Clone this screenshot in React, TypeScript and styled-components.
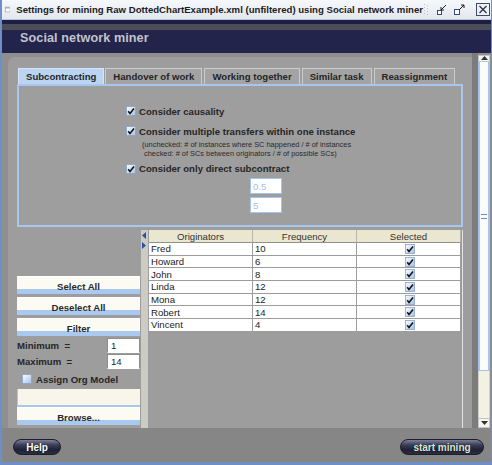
import styled, { createGlobalStyle } from 'styled-components'

// global
const GlobalStyle = createGlobalStyle`
  html, body {
    margin: 0;
    padding: 0;
    background: #ffffff;
  }
  body {
    font-family: 'Liberation Sans', Arial, sans-serif;
  }
`

// styled
const Window = styled.div`
  width: 492px;
  height: 465px;
  box-sizing: border-box;
  display: flex;
  flex-direction: column;
  border-left: 2px solid #6d8fc6;
  border-right: 1px solid #6d8fc6;
  border-bottom: 3px solid #6d8fc6;
  background: #8f8f8f;
  overflow: hidden;
`
const TitleBar = styled.div`
  display: flex;
  align-items: center;
  height: 20px;
  padding-left: 3px;
  background: linear-gradient(#f6f8fb, #e3e8ef);
  border-bottom: 1px solid #b9c4d4;
  box-sizing: border-box;
`
const TitleText = styled.span`
  flex: 1;
  margin-left: 6px;
  font-size: 9.6px;
  font-weight: bold;
  color: #1c1c1c;
  white-space: nowrap;
`
const TitleButtons = styled.div`
  display: flex;
  align-items: center;
  gap: 5px;
  padding-right: 1px;
`
const Header = styled.div`
  display: flex;
  align-items: flex-start;
  height: 33px;
  padding: 11px 0 0 18px;
  box-sizing: border-box;
  background: linear-gradient(#1c1e44 0 4px, #4d4d57 4px 10px, #22244b 10px 100%);
`
const HeaderTitle = styled.span`
  font-size: 12.6px;
  font-weight: bold;
  color: #c3c4cc;
  letter-spacing: 0.1px;
`
const Body = styled.div`
  display: flex;
  height: 375px;
`
const Panel = styled.div`
  flex: 1;
  display: flex;
  flex-direction: column;
  margin: 4px 0 0 6px;
  padding: 11px 9px 0 9px;
  background: #9d9d9d;
  border-top-left-radius: 7px;
`
const TabRow = styled.div`
  display: flex;
  align-items: flex-end;
  height: 16px;
  padding-left: 1px;
  gap: 1px;
`
const Tab = styled.div<{ $active?: boolean; $gap?: number }>`
  height: 16px;
  box-sizing: border-box;
  display: flex;
  align-items: center;
  justify-content: center;
  padding: 0 7px;
  margin-left: ${({ $gap }) => $gap ?? 0}px;
  font-size: 9.6px;
  font-weight: bold;
  color: #262626;
  white-space: nowrap;
  background: ${({ $active }) => ($active ? '#bad4f1' : '#a3a3a3')};
  border: 1px solid ${({ $active }) => ($active ? '#d6e6f8' : '#cdcdcd')};
  border-bottom: none;
`
const TabPane = styled.div`
  height: 143px;
  box-sizing: border-box;
  display: flex;
  flex-direction: column;
  padding: 18px 0 0 107px;
  border: 2px solid #a9c7ec;
  background: #9e9e9e;
`
const CheckRow = styled.label<{ $mt?: number }>`
  display: flex;
  align-items: center;
  gap: 3px;
  height: 14px;
  margin-top: ${({ $mt }) => $mt ?? 0}px;
  font-size: 9.6px;
  font-weight: bold;
  color: #262626;
`
const Note = styled.div`
  margin-left: 16px;
  padding-top: 1.5px;
  font-size: 7.4px;
  line-height: 9.5px;
  color: #2a2a2a;
  white-space: pre;
`
const ParamInput = styled.div<{ $mt?: number }>`
  width: 32px;
  height: 16px;
  box-sizing: border-box;
  margin: ${({ $mt }) => $mt ?? 0}px 0 0 124px;
  padding: 2px 2px 0;
  font-size: 9.6px;
  color: #a7bfe0;
  background: #ffffff;
  border: 1px solid #a6c4ea;
`
const Lower = styled.div`
  flex: 1;
  display: flex;
  margin-top: 3px;
`
const LeftColumn = styled.div`
  width: 123px;
  display: flex;
  flex-direction: column;
  padding-top: 46px;
`
const StripeButton = styled.div<{ $mt?: number }>`
  height: 18px;
  box-sizing: border-box;
  display: flex;
  align-items: flex-end;
  justify-content: center;
  padding-bottom: 2px;
  margin-top: ${({ $mt }) => $mt ?? 0}px;
  font-size: 9.6px;
  font-weight: bold;
  color: #2a2a2a;
  background: linear-gradient(#fbfbf3 0 72%, #a9c9ee 72% 100%);
  border-top: 1px solid #ffffff;
`
const EmptyField = styled.div`
  height: 18px;
  margin-top: 2px;
  box-sizing: border-box;
  background: #f8f6ea;
  border-left: 1px solid #a9c7ec;
  border-bottom: 2px solid #a9c7ec;
`
const RangeRow = styled.div<{ $mt?: number }>`
  display: flex;
  align-items: center;
  height: 15px;
  margin-top: ${({ $mt }) => $mt ?? 0}px;
`
const RangeLabel = styled.span`
  flex: 1;
  font-size: 9.6px;
  font-weight: bold;
  color: #262626;
  white-space: pre;
`
const RangeInput = styled.div`
  width: 33px;
  height: 15px;
  box-sizing: border-box;
  padding: 1px 3px 0;
  font-size: 9.6px;
  color: #1f1f1f;
  background: #ffffff;
  border: 1px solid #8d8d8d;
  border-bottom-color: #ffffff;
`
const AssignRow = styled(CheckRow)`
  padding-left: 5px;
  height: 16px;
  gap: 4px;
`
const Splitter = styled.div`
  width: 7px;
  margin: 0 1px 0 1px;
  display: flex;
  flex-direction: column;
  align-items: center;
  gap: 3px;
  padding-top: 2px;
  background-color: #dedcd2;
  background-image: radial-gradient(#b9b8b0 0.6px, transparent 0.8px);
  background-size: 2px 2px;
`
const TableArea = styled.div`
  flex: 1;
  border-right: 1px solid #e4e4e4;
`
const Grid = styled.div`
  display: grid;
  grid-template-columns: 104px 104px 1fr;
  background: #ffffff;
  border-right: 1px solid #9a9a9a;
`
const HeadCell = styled.div`
  height: 13px;
  box-sizing: border-box;
  display: flex;
  align-items: center;
  justify-content: center;
  font-size: 9.6px;
  color: #333333;
  background-color: #f3f0dc;
  background-image: radial-gradient(#dedac2 0.6px, transparent 0.8px);
  background-size: 2px 2px;
  border-right: 1px solid #b8b6a8;
  border-bottom: 1px solid #8f8f8f;
  &:last-child {
    border-right: none;
  }
`
const Cell = styled.div<{ $center?: boolean }>`
  height: 12.7px;
  box-sizing: border-box;
  display: flex;
  align-items: center;
  justify-content: ${({ $center }) => ($center ? 'center' : 'flex-start')};
  padding-left: 2px;
  font-size: 9.6px;
  color: #222222;
  border-right: 1px solid #9c9c9c;
  border-bottom: 1px solid #9c9c9c;
`
const ScrollColumn = styled.div`
  display: flex;
  flex-direction: column;
  width: 12px;
  margin: 2px 1px 0 6px;
  position: relative;
  &::before {
    content: '';
    position: absolute;
    left: -6px;
    top: -2px;
    bottom: 0;
    width: 6px;
    background: #7c7c7c;
  }
`
const ScrollArrow = styled.div<{ $h: number }>`
  height: ${({ $h }) => $h}px;
  display: flex;
  align-items: center;
  justify-content: center;
  background: #f4f4f0;
  border: 1px solid #c5c5c5;
  box-sizing: border-box;
`
const ScrollThumb = styled.div`
  height: 309px;
  box-sizing: border-box;
  display: flex;
  align-items: center;
  justify-content: center;
  background: #fbfbfb;
  border-left: 2px solid #a6c4ec;
  border-right: 2px solid #a6c4ec;
  border-bottom: 1px solid #a6c4ec;
`
const ScrollTrack = styled.div`
  flex: 1;
  background: #f3f1e4;
  border-left: 1px solid #d0d0c8;
  border-right: 1px solid #d0d0c8;
`
const Grip = styled.div`
  width: 6px;
  height: 3px;
  border-top: 1px solid #6f8fc2;
  border-bottom: 1px solid #6f8fc2;
`
const Footer = styled.div`
  flex: 1;
  display: flex;
  justify-content: space-between;
  align-items: flex-start;
  padding: 11px 7px 0 11px;
  background: #868686;
`
const PillButton = styled.div<{ $w: number; $color: string }>`
  width: ${({ $w }) => $w}px;
  height: 16px;
  box-sizing: border-box;
  display: flex;
  align-items: center;
  justify-content: center;
  border-radius: 8px;
  border: 1px solid #1d1e26;
  background: linear-gradient(#7c8198 0%, #3a3e5a 35%, #1f2134 70%, #2b2d42 100%);
  font-size: 10px;
  font-weight: bold;
  color: ${({ $color }) => $color};
  text-shadow: 0 0 1px #000000;
`

// interface
interface CheckProps {
  checked?: boolean
}

// components
function CheckBox({ checked = true }: CheckProps) {
  return (
    <svg width="10" height="10" viewBox="0 0 10 10">
      <defs>
        <linearGradient id="cbg" x1="0" y1="0" x2="1" y2="1">
          <stop offset="0" stopColor="#ffffff" />
          <stop offset="1" stopColor="#9fc0ea" />
        </linearGradient>
      </defs>
      <rect x="0.5" y="0.5" width="9" height="9" fill="url(#cbg)" stroke="#8aa3c4" strokeWidth="0.8" />
      {checked && (
        <path d="M2.2 5.2 L4 7.4 L8 2.4" fill="none" stroke="#151515" strokeWidth="1.6" />
      )}
    </svg>
  )
}

function WindowIcon() {
  return (
    <svg width="13" height="13" viewBox="0 0 13 13">
      <rect x="0.5" y="0.5" width="12" height="12" fill="#ffffff" stroke="#606878" />
      <rect x="1" y="1" width="11" height="3" fill="#8fa6c8" />
    </svg>
  )
}

function TitleIcons() {
  return (
    <TitleButtons>
      <svg width="8" height="14" viewBox="0 0 8 14">
        {[1, 4, 7, 10].map((y) => (
          <g key={y}>
            <rect x="1" y={y} width="1" height="1" fill="#b8c0cc" />
            <rect x="4" y={y + 1} width="1" height="1" fill="#b8c0cc" />
          </g>
        ))}
      </svg>
      <svg width="12" height="12" viewBox="0 0 12 12">
        <rect x="1.5" y="6.5" width="4" height="4" fill="#ffffff" stroke="#2d4f86" />
        <path d="M10 1 L5 6 M5 3 L5 6 L8 6" fill="none" stroke="#1b1b1b" strokeWidth="1" />
      </svg>
      <svg width="14" height="12" viewBox="0 0 14 12">
        <rect x="1.5" y="5.5" width="5" height="5" fill="#ffffff" stroke="#2d4f86" />
        <path d="M6 6 L11 1 M8 1 L11 1 L11 4" fill="none" stroke="#1b1b1b" strokeWidth="1" />
      </svg>
      <svg width="14" height="13" viewBox="0 0 14 13" style={{ marginLeft: 4 }}>
        <rect x="0.5" y="0.5" width="13" height="12" fill="#eef2f8" stroke="#3d4d66" />
        <path d="M3.5 3 L10.5 10 M10.5 3 L3.5 10" stroke="#2a3448" strokeWidth="1.3" />
      </svg>
    </TitleButtons>
  )
}

function Arrow({ dir }: { dir: 'left' | 'right' | 'up' | 'down' }) {
  const shapes = {
    left: 'M5 0 L1 3.5 L5 7 Z',
    right: 'M1 0 L5 3.5 L1 7 Z',
    up: 'M0 5 L3.5 1 L7 5 Z',
    down: 'M0 1 L3.5 5 L7 1 Z',
  }
  return (
    <svg width="7" height="7" viewBox="0 0 7 7">
      <path d={shapes[dir]} fill={dir === 'left' || dir === 'right' ? '#2454a8' : '#333333'} />
    </svg>
  )
}

const originators = [
  { name: 'Fred', freq: 10 },
  { name: 'Howard', freq: 6 },
  { name: 'John', freq: 8 },
  { name: 'Linda', freq: 12 },
  { name: 'Mona', freq: 12 },
  { name: 'Robert', freq: 14 },
  { name: 'Vincent', freq: 4 },
]

const tabs = ['Subcontracting', 'Handover of work', 'Working together', 'Similar task', 'Reassignment']

function App() {
  return (
    <>
      <GlobalStyle />
      <Window>
        <TitleBar>
          <WindowIcon />
          <TitleText>
            Settings for mining Raw DottedChartExample.xml (unfiltered) using Social network miner
          </TitleText>
          <TitleIcons />
        </TitleBar>
        <Header>
          <HeaderTitle>Social network miner</HeaderTitle>
        </Header>
        <Body>
          <Panel>
            <TabRow>
              {tabs.map((t, i) => (
                <Tab key={t} $active={i === 0} $gap={i >= 2 ? 1 : 0}>
                  {t}
                </Tab>
              ))}
            </TabRow>
            <TabPane>
              <CheckRow>
                <CheckBox />
                Consider causality
              </CheckRow>
              <CheckRow $mt={6}>
                <CheckBox />
                Consider multiple transfers within one instance
              </CheckRow>
              <Note>
                {'(unchecked: # of instances where SC happened / # of instances\n checked: # of SCs between originators / # of possible SCs)'}
              </Note>
              <CheckRow $mt={3}>
                <CheckBox />
                Consider only direct subcontract
              </CheckRow>
              <ParamInput $mt={2}>0.5</ParamInput>
              <ParamInput $mt={3}>5</ParamInput>
            </TabPane>
            <Lower>
              <LeftColumn>
                <StripeButton>Select All</StripeButton>
                <StripeButton $mt={3}>Deselect All</StripeButton>
                <StripeButton $mt={3}>Filter</StripeButton>
                <RangeRow $mt={2}>
                  <RangeLabel>{'Minimum  ='}</RangeLabel>
                  <RangeInput>1</RangeInput>
                </RangeRow>
                <RangeRow $mt={1}>
                  <RangeLabel>{'Maximum  ='}</RangeLabel>
                  <RangeInput>14</RangeInput>
                </RangeRow>
                <AssignRow $mt={2}>
                  <CheckBox checked={false} />
                  Assign Org Model
                </AssignRow>
                <EmptyField />
                <StripeButton>Browse...</StripeButton>
              </LeftColumn>
              <Splitter>
                <Arrow dir="left" />
                <Arrow dir="right" />
              </Splitter>
              <TableArea>
                <Grid>
                  <HeadCell>Originators</HeadCell>
                  <HeadCell>Frequency</HeadCell>
                  <HeadCell>Selected</HeadCell>
                  {originators.map((o) => (
                    <>
                      <Cell key={o.name}>{o.name}</Cell>
                      <Cell key={o.name + 'f'}>{o.freq}</Cell>
                      <Cell key={o.name + 's'} $center>
                        <CheckBox />
                      </Cell>
                    </>
                  ))}
                </Grid>
              </TableArea>
            </Lower>
          </Panel>
          <ScrollColumn>
            <ScrollArrow $h={7}>
              <Arrow dir="up" />
            </ScrollArrow>
            <ScrollThumb>
              <Grip />
            </ScrollThumb>
            <ScrollTrack />
            <ScrollArrow $h={10}>
              <Arrow dir="down" />
            </ScrollArrow>
          </ScrollColumn>
        </Body>
        <Footer>
          <PillButton $w={48} $color="#ffffff">Help</PillButton>
          <PillButton $w={84} $color="#dfe8d8">start mining</PillButton>
        </Footer>
      </Window>
    </>
  )
}

export default App
